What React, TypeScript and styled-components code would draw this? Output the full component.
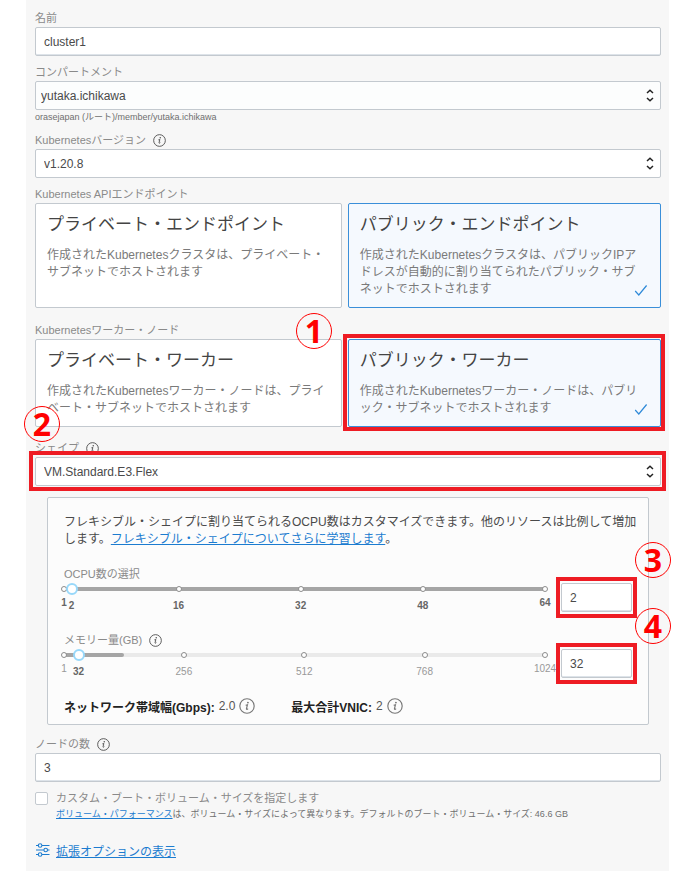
import React, { useState } from "react";
import styled, { createGlobalStyle, css } from "styled-components";

const GlobalStyle = createGlobalStyle`
  *, *::before, *::after { box-sizing: border-box; }
  body {
    margin: 0;
    background: #fff;
    color: #444;
    font-family: "Liberation Sans", "Noto Sans CJK JP", sans-serif;
    font-size: 12px;
  }
`;

const LINE = "#c3c9cf";
const BLUE = "#1c7cd0";
const RED = "#ee1c24";

const Page = styled.main`
  min-height: 100vh;
  margin: 0 25px 0 26px;
  padding: 9px 8px 11px 9px;
  background: #f7f7f7;
`;

const Form = styled.form`
  display: flex;
  flex-direction: column;
`;

const Field = styled.div<{ $gap?: number }>`
  display: flex;
  flex-direction: column;
  margin-bottom: ${(p) => p.$gap ?? 7}px;
`;

const LabelRow = styled.div`
  display: flex;
  align-items: center;
  gap: 7px;
  height: 18px;
`;

const labelText = css`
  color: #8a8a8a;
  font-size: 11px;
  line-height: 18px;
`;

const FieldLabel = styled.label`
  ${labelText}
`;

const GroupLabel = styled.span`
  ${labelText}
`;

const Help = styled.div`
  color: #6f6f6f;
  font-size: 9px;
  line-height: 14px;
`;

const boxed = css`
  width: 100%;
  height: 29px;
  margin: 0;
  padding: 0 8px;
  border: 1px solid ${LINE};
  border-radius: 2px;
  background: #fff;
  color: #4a4a4a;
  font: inherit;
  font-size: 12px;
  outline: none;
`;

const TextInput = styled.input`
  ${boxed}
  box-shadow: inset 0 -1px 0 #dde3e9;
`;

const Control = styled.div`
  position: relative;
`;

const SelectInput = styled.select<{ $muted?: boolean }>`
  ${boxed}
  display: block;
  appearance: none;
  ${(p) => p.$muted && "background: #fcfdfd; padding-left: 5px;"}
`;

const ArrowSlot = styled.span`
  position: absolute;
  top: 8px;
  right: 7px;
  line-height: 0;
  pointer-events: none;
`;

const CardGrid = styled.div`
  display: grid;
  grid-template-columns: 49fr 50fr;
  gap: 6px;
`;

const Card = styled.label<{ $selected: boolean }>`
  position: relative;
  display: block;
  padding: 9px 11px 9px;
  border: 1px solid ${(p) => (p.$selected ? "#3a8fd9" : LINE)};
  border-radius: 2px;
  background: ${(p) => (p.$selected ? "#f5f9fe" : "#fff")};
  cursor: pointer;
`;

const CardRadio = styled.input`
  position: absolute;
  opacity: 0;
`;

const CardTitle = styled.span`
  display: block;
  margin-bottom: 10px;
  color: #444;
  font-size: 17px;
  line-height: 24px;
`;

const CardText = styled.span`
  display: block;
  max-width: 284px;
  color: #7a7a7a;
  line-height: 17px;
`;

const CheckSlot = styled.span`
  position: absolute;
  right: 12px;
  bottom: 10px;
  line-height: 0;
`;

const Highlight = styled.span<{ $compact?: boolean }>`
  position: absolute;
  inset: ${(p) => (p.$compact ? "-6px -5px -6px -5px" : "-6px -5px -5px -6px")};
  border: 4px solid ${RED};
  pointer-events: none;
`;

const Badge = styled.span<{ $left?: string; $right?: string; $top: string }>`
  position: absolute;
  left: ${(p) => p.$left ?? "auto"};
  right: ${(p) => p.$right ?? "auto"};
  top: ${(p) => p.$top};
  z-index: 2;
  display: flex;
  align-items: center;
  justify-content: center;
  width: 36px;
  height: 36px;
  border: 1px solid #f00;
  border-radius: 50%;
  color: #f00;
  font-family: "Noto Sans", sans-serif;
  font-size: 32px;
  font-weight: 700;
  line-height: 32px;
  pointer-events: none;
`;

const ShapePanel = styled.section`
  margin: 0 12px 10px;
  padding: 16px 16px 9px;
  border: 1px solid ${LINE};
  border-radius: 2px;
  background: #fcfcfc;
`;

const Intro = styled.p`
  margin: 0 -6px 17px 0;
  color: #4a4a4a;
  line-height: 17px;
`;

const Link = styled.a`
  color: ${BLUE};
  text-decoration: underline;
  text-underline-offset: 1px;
`;

const Resource = styled.div`
  margin-bottom: 19px;
`;

const ResourceRow = styled.div`
  display: grid;
  grid-template-columns: 1fr 71px;
  gap: 16px;
`;

const Slider = styled.div`
  position: relative;
  height: 29px;
`;

const Track = styled.div`
  height: 4px;
  margin-top: 4px;
  border-radius: 2px;
  background: #eaeaea;
`;

const Fill = styled.div`
  height: 4px;
  border-radius: 2px;
  background: #a5a5a5;
`;

const Mark = styled.span`
  position: absolute;
  top: 3px;
  width: 6px;
  height: 6px;
  margin-left: -3px;
  border: 1px solid #8c8c8c;
  border-radius: 50%;
  background: #fff;
`;

const MarkLabel = styled.span<{ $bold: boolean; $edge: boolean }>`
  position: absolute;
  top: ${(p) => (p.$edge ? 14 : 17)}px;
  width: 30px;
  margin-left: -15px;
  color: ${(p) => (p.$bold ? "#666" : "#999")};
  font-size: 10px;
  font-weight: ${(p) => (p.$bold ? 700 : 400)};
  line-height: 12px;
  text-align: center;
`;

const thumb = css`
  width: 12px;
  height: 12px;
  border: 2px solid #98d8fa;
  border-radius: 50%;
  background: #fff;
`;

const Range = styled.input`
  position: absolute;
  top: 0;
  left: -6px;
  width: calc(100% + 12px);
  height: 12px;
  margin: 0;
  appearance: none;
  background: transparent;
  &::-webkit-slider-thumb {
    appearance: none;
    ${thumb}
  }
  &::-moz-range-thumb {
    ${thumb}
  }
`;

const Stats = styled.dl`
  display: flex;
  gap: 36px;
  margin: 0;
`;

const Stat = styled.div`
  display: flex;
  align-items: center;
  gap: 4px;
  height: 18px;
`;

const StatName = styled.dt`
  color: #222;
  font-weight: 700;
`;

const StatValue = styled.dd`
  margin: 0;
  color: #555;
`;

const CheckRow = styled.div`
  display: grid;
  grid-template-columns: 13px 1fr;
  column-gap: 8px;
  align-items: center;
  margin-bottom: 20px;
`;

const CheckBox = styled.input`
  width: 13px;
  height: 13px;
  margin: 0;
  appearance: none;
  border: 1px solid ${LINE};
  border-radius: 2px;
  background: #fff;
  &:checked {
    background: ${BLUE};
  }
`;

const CheckHelp = styled(Help)`
  grid-column: 2;
`;

const AdvancedRow = styled.div`
  display: flex;
  align-items: center;
  gap: 6px;
  height: 18px;
`;

const InfoIcon = ({ size = 13, color = "#505050" }: { size?: number; color?: string }) => (
  <svg width={size} height={size} viewBox="0 0 14 14" fill="none" role="img" aria-label="情報">
    <circle cx="7" cy="7" r="6.3" stroke={color} strokeWidth="1" />
    <circle cx="7.8" cy="4" r="0.8" fill={color} />
    <path d="M5.8 6.3 L7.4 5.9 L6.5 9.4 C6.4 10.2 7.2 10 7.9 9.2" stroke={color} strokeWidth="1" />
  </svg>
);

const Arrows = () => (
  <svg width="8" height="13" viewBox="0 0 8 13" fill="none" stroke="#222" strokeWidth="1.5">
    <path d="M1 4 L4 1.2 L7 4" />
    <path d="M1 9 L4 11.8 L7 9" />
  </svg>
);

const Check = () => (
  <svg width="14" height="13" viewBox="0 0 14 13" fill="none" stroke="#2f8ad8" strokeWidth="1.2">
    <path d="M1.2 7 L4.8 11 L12.6 1.5" />
  </svg>
);

const OptionsIcon = () => (
  <svg width="15" height="16" viewBox="0 0 15 16" fill="none" stroke={BLUE} strokeWidth="1.1">
    <path d="M1 3.5 H3.2 M7 3.5 H14.5 M1 8 H8.8 M12.6 8 H14.5 M1 12.5 H3.2 M7 12.5 H14.5" />
    <circle cx="5.1" cy="3.5" r="1.8" />
    <circle cx="10.7" cy="8" r="1.8" />
    <circle cx="5.1" cy="12.5" r="1.8" />
  </svg>
);

type SelectFieldProps = {
  id: string;
  label: string;
  value: string;
  info?: boolean;
  muted?: boolean;
  gap?: number;
  help?: string;
  children?: React.ReactNode;
};

const SelectField = ({ id, label, value, info, muted, gap, help, children }: SelectFieldProps) => (
  <Field $gap={gap}>
    <LabelRow>
      <FieldLabel htmlFor={id}>{label}</FieldLabel>
      {info && <InfoIcon />}
    </LabelRow>
    <Control>
      <SelectInput id={id} $muted={muted} defaultValue={value}>
        <option>{value}</option>
      </SelectInput>
      <ArrowSlot>
        <Arrows />
      </ArrowSlot>
      {children}
    </Control>
    {help && <Help>{help}</Help>}
  </Field>
);

type Choice = { title: string; text: string; highlight?: boolean; badge?: string };

const CardChoice = ({ name, label, gap, choices }: { name: string; label: string; gap: number; choices: Choice[] }) => {
  const [selected, setSelected] = useState(1);
  return (
    <Field $gap={gap} role="radiogroup" aria-labelledby={name}>
      <LabelRow>
        <GroupLabel id={name}>{label}</GroupLabel>
      </LabelRow>
      <CardGrid>
        {choices.map((c, i) => (
          <Card key={c.title} $selected={i === selected}>
            <CardRadio type="radio" name={name} checked={i === selected} onChange={() => setSelected(i)} />
            <CardTitle>{c.title}</CardTitle>
            <CardText>{c.text}</CardText>
            {i === selected && (
              <CheckSlot>
                <Check />
              </CheckSlot>
            )}
            {c.highlight && <Highlight />}
            {c.badge && (
              <Badge $left="-53px" $top="-27px">
                {c.badge}
              </Badge>
            )}
          </Card>
        ))}
      </CardGrid>
    </Field>
  );
};

type ResourceProps = {
  id: string;
  label: string;
  info?: boolean;
  max: number;
  limit: number;
  marks: number[];
  initial: number;
  bold: boolean;
  badge: string;
};

const ResourceSlider = ({ id, label, info, max, limit, marks, initial, bold, badge }: ResourceProps) => {
  const [value, setValue] = useState(initial);
  const place = (n: number) => `${((n - 1) / (max - 1)) * 100}%`;
  const change = (e: React.ChangeEvent<HTMLInputElement>) => setValue(Number(e.target.value));
  return (
    <Resource>
      <LabelRow>
        <FieldLabel htmlFor={id}>{label}</FieldLabel>
        {info && <InfoIcon />}
      </LabelRow>
      <ResourceRow>
        <Slider>
          <Track>
            <Fill style={{ width: place(limit) }} />
          </Track>
          {marks.map((m) => (
            <Mark key={m} style={{ left: place(m) }} />
          ))}
          {marks.map((m) => (
            <MarkLabel key={m} $bold={bold} $edge={m === 1 || m === max} style={{ left: place(m) }}>
              {m}
            </MarkLabel>
          ))}
          <MarkLabel $bold $edge={false} style={{ left: place(value) }}>
            {value}
          </MarkLabel>
          <Range type="range" aria-label={label} min={1} max={max} value={value} onChange={change} />
        </Slider>
        <Control>
          <TextInput id={id} value={value} onChange={change} />
          <Highlight $compact />
          <Badge $right="-39px" $top="-41px">
            {badge}
          </Badge>
        </Control>
      </ResourceRow>
    </Resource>
  );
};

export default function App() {
  return (
    <>
      <GlobalStyle />
      <Page>
        <Form onSubmit={(e) => e.preventDefault()}>
          <Field>
            <LabelRow>
              <FieldLabel htmlFor="name">名前</FieldLabel>
            </LabelRow>
            <TextInput id="name" defaultValue="cluster1" />
          </Field>

          <SelectField
            id="compartment"
            label="コンパートメント"
            value="yutaka.ichikawa"
            muted
            help="orasejapan (ルート)/member/yutaka.ichikawa"
          />
          <SelectField id="version" label="Kubernetesバージョン" value="v1.20.8" info />

          <CardChoice
            name="endpoint"
            label="Kubernetes APIエンドポイント"
            gap={13}
            choices={[
              {
                title: "プライベート・エンドポイント",
                text: "作成されたKubernetesクラスタは、プライベート・サブネットでホストされます",
              },
              {
                title: "パブリック・エンドポイント",
                text: "作成されたKubernetesクラスタは、パブリックIPアドレスが自動的に割り当てられたパブリック・サブネットでホストされます",
              },
            ]}
          />
          <CardChoice
            name="worker"
            label="Kubernetesワーカー・ノード"
            gap={12}
            choices={[
              {
                title: "プライベート・ワーカー",
                text: "作成されたKubernetesワーカー・ノードは、プライベート・サブネットでホストされます",
              },
              {
                title: "パブリック・ワーカー",
                text: "作成されたKubernetesワーカー・ノードは、パブリック・サブネットでホストされます",
                highlight: true,
                badge: "1",
              },
            ]}
          />

          <SelectField id="shape" label="シェイプ" value="VM.Standard.E3.Flex" info gap={11}>
            <Highlight />
            <Badge $left="-11px" $top="-51px">
              2
            </Badge>
          </SelectField>

          <ShapePanel>
            <Intro>
              フレキシブル・シェイプに割り当てられるOCPU数はカスタマイズできます。他のリソースは比例して増加します。
              <Link href="#shapes">フレキシブル・シェイプについてさらに学習します</Link>。
            </Intro>
            <ResourceSlider
              id="ocpu"
              label="OCPU数の選択"
              max={64}
              limit={64}
              marks={[1, 16, 32, 48, 64]}
              initial={2}
              bold
              badge="3"
            />
            <ResourceSlider
              id="memory"
              label="メモリー量(GB)"
              info
              max={1024}
              limit={128}
              marks={[1, 256, 512, 768, 1024]}
              initial={32}
              bold={false}
              badge="4"
            />
            <Stats>
              <Stat>
                <StatName>ネットワーク帯域幅(Gbps):</StatName>
                <StatValue>2.0</StatValue>
                <InfoIcon size={16} color="#777" />
              </Stat>
              <Stat>
                <StatName>最大合計VNIC:</StatName>
                <StatValue>2</StatValue>
                <InfoIcon size={16} color="#777" />
              </Stat>
            </Stats>
          </ShapePanel>

          <Field>
            <LabelRow>
              <FieldLabel htmlFor="nodes">ノードの数</FieldLabel>
              <InfoIcon />
            </LabelRow>
            <TextInput id="nodes" defaultValue="3" />
          </Field>

          <CheckRow>
            <CheckBox id="boot" type="checkbox" />
            <FieldLabel htmlFor="boot">カスタム・ブート・ボリューム・サイズを指定します</FieldLabel>
            <CheckHelp>
              <Link href="#performance">ボリューム・パフォーマンス</Link>
              は、ボリューム・サイズによって異なります。デフォルトのブート・ボリューム・サイズ: 46.6 GB
            </CheckHelp>
          </CheckRow>

          <AdvancedRow>
            <OptionsIcon />
            <Link href="#advanced">拡張オプションの表示</Link>
          </AdvancedRow>
        </Form>
      </Page>
    </>
  );
}
